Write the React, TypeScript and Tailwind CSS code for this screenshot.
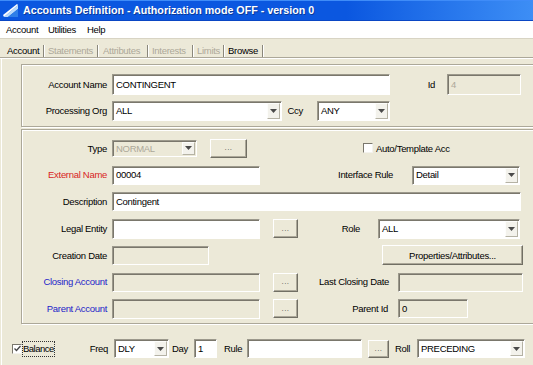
import React from "react";

const sunken =
  "border border-t-[#9c998c] border-l-[#9c998c] border-b-white border-r-white shadow-[inset_1px_1px_0_#7a776c]";
const raised =
  "border border-t-white border-l-white border-b-[#716f64] border-r-[#716f64] shadow-[inset_-1px_-1px_0_#aca899]";

function Input({
  className,
  value,
  disabled,
  textClass,
}: {
  className: string;
  value?: string;
  disabled?: boolean;
  textClass?: string;
}) {
  return (
    <div
      className={`${sunken} ${className} ${
        disabled ? "bg-[#ece9d8]" : "bg-white"
      } flex items-center pl-[3px] shrink-0`}
    >
      <span className={textClass ?? "text-black"}>{value}</span>
    </div>
  );
}

function Arrow() {
  return (
    <svg width="7" height="4" viewBox="0 0 7 4">
      <polygon points="0,0 7,0 3.5,4" fill="#4a4a4a" />
    </svg>
  );
}

function Combo({
  className,
  value,
  disabled,
}: {
  className: string;
  value?: string;
  disabled?: boolean;
}) {
  return (
    <div
      className={`${sunken} ${className} ${
        disabled ? "bg-[#ece9d8]" : "bg-white"
      } flex items-stretch shrink-0 p-[1px]`}
    >
      <div className="flex-1 flex items-center pl-[2px]">
        <span className={disabled ? "text-[#aca899]" : "text-black"}>{value}</span>
      </div>
      <div className="w-[13px] flex items-center justify-center bg-[#f3f2ec] border border-t-[#fdfdfb] border-l-[#fdfdfb] border-b-[#b5b2a4] border-r-[#b5b2a4]">
        <Arrow />
      </div>
    </div>
  );
}

function Btn({ className, label }: { className: string; label: string }) {
  return (
    <div
      className={`${raised} ${className} bg-[#ece9d8] flex items-center justify-center shrink-0`}
    >
      <span className="text-black">{label}</span>
    </div>
  );
}

function Dots({ className }: { className: string }) {
  return (
    <div
      className={`${raised} ${className} bg-[#ece9d8] flex items-center justify-center shrink-0`}
    >
      <span className="text-[#555] text-[8px] tracking-[0.5px]">...</span>
    </div>
  );
}

function Check({ checked }: { checked?: boolean }) {
  return (
    <div className="w-[10px] h-[10px] bg-white border border-t-[#7a776c] border-l-[#7a776c] border-b-[#f4f3ee] border-r-[#f4f3ee] flex items-center justify-center shrink-0">
      {checked && (
        <svg width="7" height="7" viewBox="0 0 7 7">
          <polyline points="0.5,3.5 2.5,5.5 6.5,1" fill="none" stroke="#444" strokeWidth="1.3" />
        </svg>
      )}
    </div>
  );
}

function Label({ className, text, color }: { className: string; text: string; color?: string }) {
  return (
    <div className={`${className} shrink-0 text-right whitespace-nowrap ${color ?? "text-black"}`}>
      {text}
    </div>
  );
}

const panel =
  "border border-[#aca899] shadow-[inset_1px_1px_0_#ffffff,1px_1px_0_#ffffff]";

export default function App() {
  return (
    <div className="w-[533px] h-[365px] overflow-hidden bg-[#ece9d8] flex flex-col text-[9.5px] tracking-[-0.3px] leading-none text-black font-['Liberation_Sans',Arial,sans-serif]">
      {/* Title bar */}
      <div className="h-[21px] shrink-0 flex items-center bg-linear-to-r from-[#0b57e0] from-65% to-[#3d8ef5] shadow-[inset_0_1px_0_#3f8cf8,inset_0_-1px_0_#0a46c4]">
        <svg width="16" height="15" viewBox="0 0 16 15" className="ml-[3px] shrink-0">
          <polygon points="1,14 15,2 15,6 5,14" fill="#b9dbfb" />
          <polygon points="1,14 15,2 14,1 0,12" fill="#ffffff" />
          <polygon points="5,14 15,6 15,14" fill="#2e7fe8" />
        </svg>
        <span className="ml-[4px] text-white font-bold text-[10.7px] tracking-normal whitespace-nowrap [text-shadow:1px_1px_0_#0a3a9a]">
          Accounts Definition - Authorization mode OFF - version 0
        </span>
      </div>

      {/* Menu bar */}
      <div className="h-[18px] shrink-0 bg-white border-b border-[#d8d4c4] flex items-center">
        <div className="w-[42px] pl-[6px]">Account</div>
        <div className="w-[40px] pl-[6px]">Utilities</div>
        <div className="pl-[5px]">Help</div>
      </div>

      {/* Tab strip */}
      <div className="h-[19px] shrink-0 flex items-stretch border-b border-[#aca899] shadow-[0_1px_0_#ffffff]">
        <div className="w-[43px] pl-[7px] flex items-center pt-[5px]">Account</div>
        <div className="self-end h-[12px] w-[2px] border-l border-[#8a877b] border-r border-r-white" />
        <div className="w-[52px] pl-[3px] flex items-center pt-[5px] text-[#aca899]">Statements</div>
        <div className="self-end h-[12px] w-[2px] border-l border-[#8a877b] border-r border-r-white" />
        <div className="w-[48px] pl-[4px] flex items-center pt-[5px] text-[#aca899]">Attributes</div>
        <div className="self-end h-[12px] w-[2px] border-l border-[#8a877b] border-r border-r-white" />
        <div className="w-[43px] pl-[3px] flex items-center pt-[5px] text-[#aca899]">Interests</div>
        <div className="self-end h-[12px] w-[2px] border-l border-[#8a877b] border-r border-r-white" />
        <div className="w-[29px] pl-[3px] flex items-center pt-[5px] text-[#aca899]">Limits</div>
        <div className="self-end h-[12px] w-[2px] border-l border-[#8a877b] border-r border-r-white" />
        <div className="w-[37px] pl-[3px] flex items-center pt-[5px]">Browse</div>
        <div className="self-end h-[12px] w-[2px] border-l border-[#8a877b] border-r border-r-white" />
      </div>

      {/* Content */}
      <div className="flex-1 flex flex-col pt-[6px] border-l border-white ml-[1px]">
        {/* Panel 1 */}
        <div className={`${panel} ml-[19px] w-[540px] h-[63px] pt-[9px] flex flex-col gap-[6px]`}>
          <div className="h-[21px] flex items-center">
            <Label className="w-[85px]" text="Account Name" />
            <Input className="ml-[5px] w-[278px] h-[21px]" value="CONTINGENT" />
            <Label className="w-[45px]" text="Id" />
            <Input className="ml-[12px] w-[74px] h-[21px]" value="4" disabled textClass="text-[#aca899]" />
          </div>
          <div className="h-[20px] flex items-center">
            <Label className="w-[85px]" text="Processing Org" />
            <Combo className="ml-[5px] w-[170px] h-[20px]" value="ALL" />
            <Label className="w-[21px]" text="Ccy" />
            <Combo className="ml-[14px] w-[73px] h-[20px]" value="ANY" />
          </div>
        </div>

        {/* Panel 2 */}
        <div className={`${panel} ml-[19px] mt-[2px] w-[540px] pt-[5px] pb-[1px] flex flex-col`}>
          <div className="h-[26.75px] flex items-center">
            <Label className="w-[85px]" text="Type" />
            <Combo className="ml-[5px] w-[85px] h-[17px]" value="NORMAL" disabled />
            <Dots className="ml-[13px] w-[37px] h-[19px]" />
            <div className="ml-[116px]">
              <Check />
            </div>
            <span className="ml-[3px]">Auto/Template Acc</span>
          </div>
          <div className="h-[26.75px] flex items-center">
            <Label className="w-[85px]" text="External Name" color="text-[#d81e1e]" />
            <Input className="ml-[5px] w-[148px] h-[19px]" value="00004" />
            <Label className="w-[152px] pr-[19px]" text="Interface Rule" />
            <Combo className="w-[108px] h-[19px]" value="Detail" />
          </div>
          <div className="h-[26.75px] flex items-center">
            <Label className="w-[85px]" text="Description" />
            <Input className="ml-[5px] w-[409px] h-[19px]" value="Contingent" />
          </div>
          <div className="h-[26.75px] flex items-center">
            <Label className="w-[85px]" text="Legal Entity" />
            <Input className="ml-[5px] w-[148px] h-[20px]" value="" />
            <Dots className="ml-[13px] w-[25px] h-[19px]" />
            <Label className="w-[80px] pr-[18px]" text="Role" />
            <Combo className="w-[142px] h-[20px]" value="ALL" />
          </div>
          <div className="h-[26.75px] flex items-center">
            <Label className="w-[85px]" text="Creation Date" />
            <Input className="ml-[5px] w-[97px] h-[19px]" value="" disabled />
            <Btn className="ml-[173px] w-[141px] h-[20px]" label="Properties/Attributes..." />
          </div>
          <div className="h-[26.75px] flex items-center">
            <Label className="w-[85px]" text="Closing Account" color="text-[#2323c8]" />
            <Input className="ml-[5px] w-[148px] h-[19px]" value="" disabled />
            <Dots className="ml-[13px] w-[25px] h-[19px]" />
            <Label className="w-[100px] pr-[9px]" text="Last Closing Date" />
            <Input className="w-[125px] h-[19px]" value="" disabled />
          </div>
          <div className="h-[26.75px] flex items-center">
            <Label className="w-[85px]" text="Parent Account" color="text-[#2323c8]" />
            <Input className="ml-[5px] w-[148px] h-[20px]" value="" disabled />
            <Dots className="ml-[13px] w-[25px] h-[19px]" />
            <Label className="w-[100px] pr-[10px]" text="Parent Id" />
            <Input className="w-[70px] h-[19px]" value="0" disabled />
          </div>
        </div>

        {/* Balance row */}
        <div className="mt-[15px] h-[19px] flex items-center">
          <div className="w-[53px] shrink-0 flex items-center">
            <div className="ml-[10px]">
              <Check checked />
            </div>
            <span className="border border-dotted border-[#333] py-[2px] tracking-[-0.5px]">Balance</span>
          </div>
          <Label className="w-[59px] pr-[6px]" text="Freq" />
          <Combo className="w-[55px] h-[19px]" value="DLY" />
          <div className="w-[25px] pl-[3px] shrink-0">Day</div>
          <Input className="w-[23px] h-[19px]" value="1" />
          <div className="w-[30px] pl-[7px] shrink-0">Rule</div>
          <Input className="w-[115px] h-[19px]" value="" />
          <Dots className="ml-[6px] w-[21px] h-[18px]" />
          <div className="w-[28px] pl-[6px] shrink-0">Roll</div>
          <Combo className="w-[108px] h-[19px]" value="PRECEDING" />
        </div>
      </div>
    </div>
  );
}
